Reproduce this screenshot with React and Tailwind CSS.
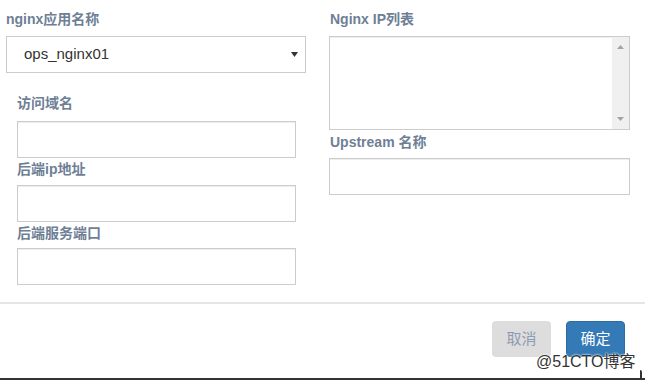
import React from 'react';

const font = "font-['Liberation_Sans','Noto_Sans_CJK_SC',sans-serif]";

function Label({ children, className = '' }) {
  return (
    <div className={`h-[18px] leading-[18px] text-[14px] font-bold text-[#6e7f96] whitespace-nowrap ${className}`}>
      {children}
    </div>
  );
}

function Input({ className = '' }) {
  return (
    <div className={`h-[37px] border border-[#cccccc] bg-white shadow-[inset_0_1px_1px_rgba(0,0,0,0.075)] ${className}`} />
  );
}

export default function App() {
  return (
    <div className={`w-[645px] h-[380px] bg-white flex flex-col overflow-hidden relative ${font}`}>
      {/* form */}
      <div className="h-[302px] flex gap-[23px] pt-[10px] pl-[6px]">
        {/* left column */}
        <div className="w-[300px] flex flex-col">
          <Label className="text-[#5d6876]">nginx应用名称</Label>
          <div className="mt-[8px] h-[37px] border border-[#cccccc] flex items-center justify-between pl-[17px] pr-[7px]">
            <span className="text-[15px] text-[#333333]">ops_nginx01</span>
            <svg width="7" height="5" viewBox="0 0 7 5">
              <path d="M0 0 L7 0 L3.5 5 Z" fill="#333" />
            </svg>
          </div>
          <div className="pl-[11px] pr-[10px] flex flex-col">
            <Label className="mt-[21px]">访问域名</Label>
            <Input className="mt-[9px]" />
            <Label className="mt-[2px]">后端ip地址</Label>
            <Input className="mt-[7px]" />
            <Label className="mt-[2px]">后端服务端口</Label>
            <Input className="mt-[6px]" />
          </div>
        </div>

        {/* right column */}
        <div className="w-[301px] flex flex-col">
          <Label className="pl-[1px]">Nginx IP列表</Label>
          <div className="mt-[8px] h-[94px] border border-[#cccccc] flex shadow-[inset_0_1px_1px_rgba(0,0,0,0.075)]">
            <div className="flex-1" />
            <div className="w-[17px] bg-[#f0f0f0] flex flex-col items-center justify-between py-[8px]">
              <svg width="7" height="4" viewBox="0 0 7 4">
                <path d="M0 4 L7 4 L3.5 0 Z" fill="#a3a3a3" />
              </svg>
              <svg width="7" height="4" viewBox="0 0 7 4">
                <path d="M0 0 L7 0 L3.5 4 Z" fill="#a3a3a3" />
              </svg>
            </div>
          </div>
          <Label className="mt-[3px] pl-[1px]">Upstream 名称</Label>
          <Input className="mt-[7px]" />
        </div>
      </div>

      {/* footer */}
      <div className="border-t-2 border-[#e5e5e5] flex-1 border-b-2 border-b-[#333333] flex justify-end gap-[15px] pt-[17px] pr-[20px]">
        <button className="w-[59px] h-[36px] rounded-[4px] bg-[#dddddd] text-[15px] text-[#8d9cb1]">取消</button>
        <button className="w-[59px] h-[36px] rounded-[4px] bg-[#337ab7] border border-[#2e6da4] text-[15px] text-white">确定</button>
      </div>

      <div className="absolute left-[536px] top-[350px] text-[16px] text-[#333333] [text-shadow:0_0_2px_#fff,0_0_2px_#fff]">
        @51CTO博客
      </div>
      <div className="absolute left-[640px] top-[370px] w-[2px] h-[10px] bg-[#333333] rounded-tr-[2px]" />
    </div>
  );
}
